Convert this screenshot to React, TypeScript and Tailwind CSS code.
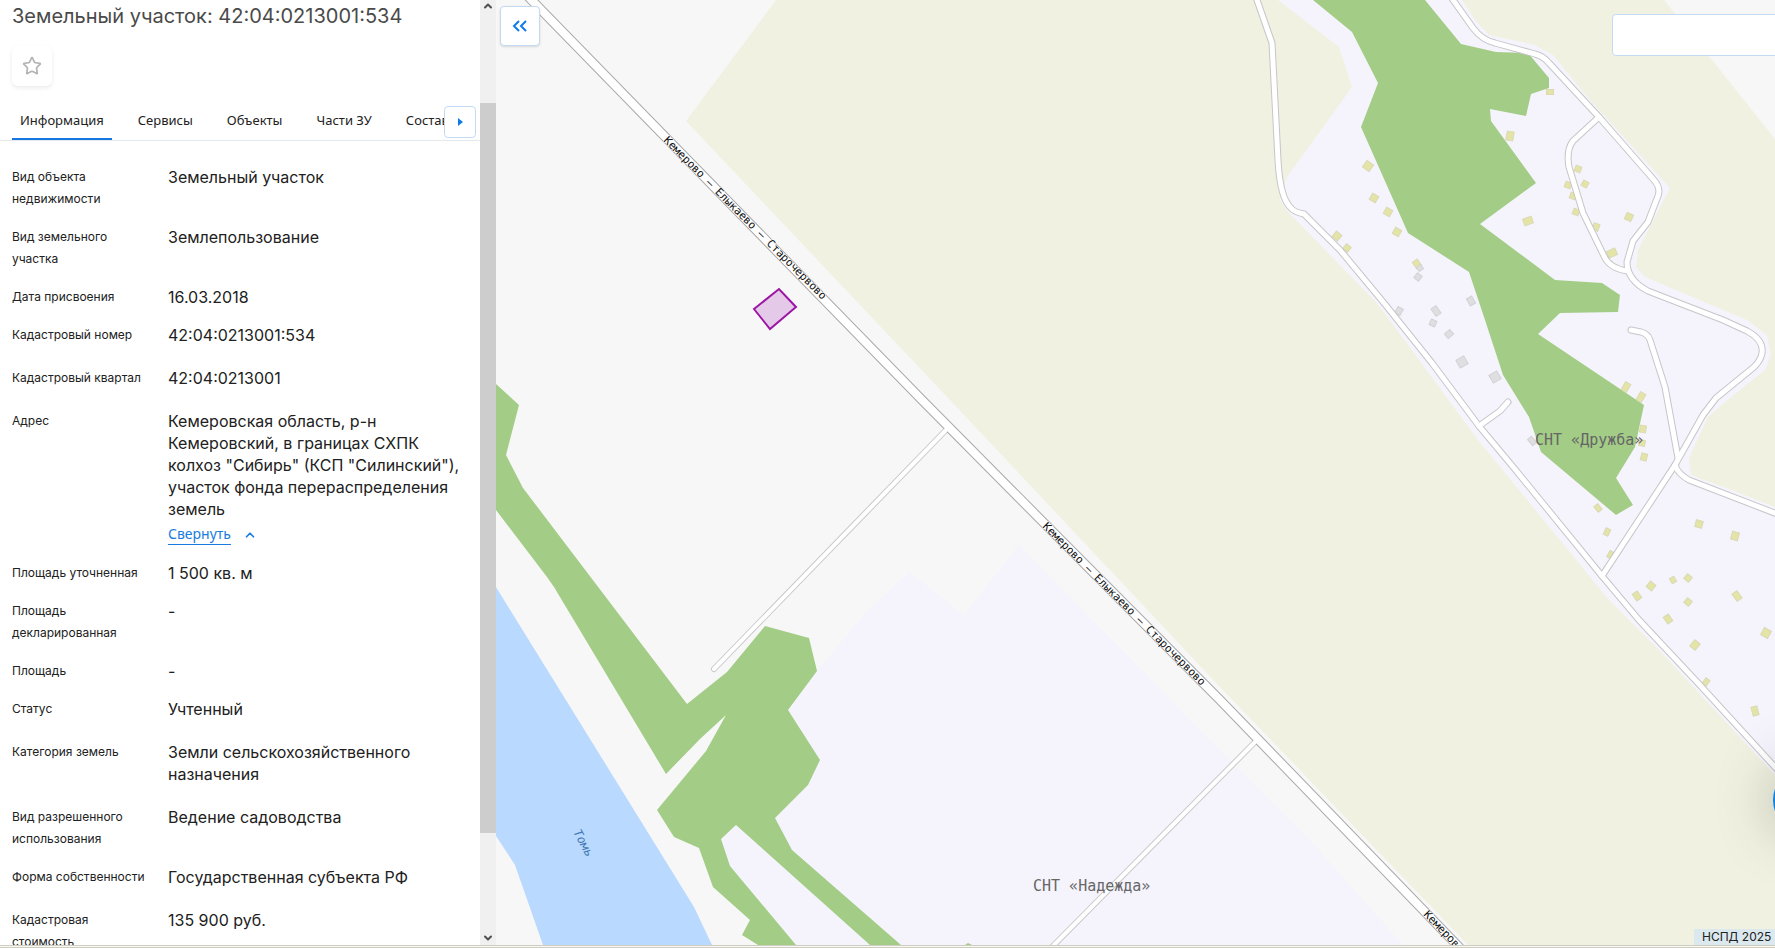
import { useState } from "react";
import { ChevronDown, ChevronUp, ChevronsLeft, Star } from "lucide-react";

const tabs = ["Информация", "Сервисы", "Объекты", "Части ЗУ", "Состав"];

type Row = { label: string; value: string; tall?: boolean; collapsible?: boolean };

const rows: Row[] = [
  { label: "Вид объекта недвижимости", value: "Земельный участок" },
  { label: "Вид земельного участка", value: "Землепользование" },
  { label: "Дата присвоения", value: "16.03.2018" },
  { label: "Кадастровый номер", value: "42:04:0213001:534", tall: true },
  { label: "Кадастровый квартал", value: "42:04:0213001", tall: true },
  {
    label: "Адрес",
    value:
      'Кемеровская область, р-н Кемеровский, в границах СХПК колхоз "Сибирь" (КСП "Силинский"), участок фонда перераспределения земель',
    collapsible: true,
  },
  { label: "Площадь уточненная", value: "1 500 кв. м" },
  { label: "Площадь декларированная", value: "-" },
  { label: "Площадь", value: "-" },
  { label: "Статус", value: "Учтенный", tall: true },
  { label: "Категория земель", value: "Земли сельскохозяйственного назначения", tall: true },
  { label: "Вид разрешенного использования", value: "Ведение садоводства" },
  { label: "Форма собственности", value: "Государственная субъекта РФ", tall: true },
  { label: "Кадастровая стоимость", value: "135 900 руб." },
];

const mainRoad = "M512 -20 L922 400 L1040 519 L1220 700 L1457 945 L1477 966";

const laneRoads = [
  "M946 430 L714 669",
  "M1255 742 L1054 945 L1044 955",
];

const streets = [
  "M1254 -10 L1257 0 L1272 43 L1278 160 Q1280 198 1291 208 Q1294 212 1304 214 L1340 250 L1384 303 L1432 363 L1479 426 L1514 468 L1602 576 L1639 620 L1698 683 L1785 778",
  "M1446 -10 L1473 28 Q1482 40 1495 43 L1535 54 Q1543 56 1549 63 L1599 117 L1654 180 Q1661 188 1658 196 L1648 222 L1633 241 L1627 262 Q1627 280 1648 291 L1723 320 L1747 331 Q1764 340 1762 353 Q1761 360 1754 367 L1716 398 L1703 415 L1675 465 L1602 576",
  "M1599 117 L1573 141 Q1566 150 1569 167 L1583 213 L1604 256 Q1609 268 1627 271",
  "M1631 330 L1641 332 Q1648 334 1650 340 L1665 387 L1678 458",
  "M1675 465 Q1678 474 1689 480 L1785 517",
  "M1479 426 L1500 411 L1508 402",
];

// x, y, width, height, angle
const houses = [
  [1550, 92, 7, 5, 0],
  [1510, 136, 7, 9, 10],
  [1368, 166, 8, 8, 35],
  [1374, 198, 7, 7, 30],
  [1388, 212, 7, 7, 30],
  [1397, 232, 7, 7, 30],
  [1337, 236, 7, 7, 40],
  [1347, 248, 6, 6, 40],
  [1417, 264, 6, 8, -35],
  [1528, 221, 9, 7, -20],
  [1578, 169, 6, 6, 20],
  [1568, 185, 6, 6, 20],
  [1585, 184, 6, 6, 30],
  [1573, 196, 6, 6, 20],
  [1576, 212, 6, 6, 20],
  [1596, 227, 6, 7, 20],
  [1612, 253, 9, 7, -25],
  [1629, 217, 7, 7, 25],
  [1626, 387, 6, 9, 30],
  [1641, 397, 6, 9, 30],
  [1643, 429, 6, 7, 10],
  [1642, 443, 6, 6, 10],
  [1644, 457, 6, 7, 15],
  [1598, 508, 5, 7, -40],
  [1607, 532, 5, 7, 25],
  [1611, 555, 6, 7, 30],
  [1699, 524, 7, 7, 15],
  [1735, 536, 7, 8, 15],
  [1651, 586, 7, 7, 40],
  [1637, 596, 6, 8, -35],
  [1673, 580, 5, 6, -30],
  [1688, 578, 6, 6, 40],
  [1688, 602, 6, 6, 40],
  [1737, 596, 6, 9, -35],
  [1668, 619, 6, 8, -35],
  [1695, 645, 7, 8, 40],
  [1766, 633, 8, 8, 30],
  [1706, 682, 5, 7, 35],
  [1755, 711, 6, 9, -15],
];

const sheds = [
  [1420, 268, 5, 5, -35],
  [1418, 277, 6, 6, 40],
  [1399, 311, 6, 7, 30],
  [1436, 311, 6, 9, -35],
  [1471, 301, 6, 8, -30],
  [1433, 323, 6, 6, 25],
  [1449, 334, 6, 7, 50],
  [1462, 362, 9, 9, -30],
  [1495, 377, 9, 9, -30],
  [1532, 441, 5, 8, -40],
];

const roadLabels = [
  { x: 663, y: 141, angle: 45 },
  { x: 1042, y: 527, angle: 45 },
  { x: 1423, y: 915, angle: 46 },
];

const Road = ({ d, width, edge }: { d: string; width: number; edge: string }) => (
  <path d={d} fill="none" stroke={edge} strokeWidth={width} strokeLinecap="round" strokeLinejoin="round" />
);

const MapCanvas = () => (
  <svg
    viewBox="496 0 1279 945"
    preserveAspectRatio="xMinYMin slice"
    className="absolute inset-0 h-full w-full font-['DejaVu_Sans_Mono',monospace]"
    role="img"
    aria-label="Карта"
  >
    <rect x="496" width="1279" height="945" fill="#f7f7f7" />
    <path d="M496 587 L694 907 L712 945 L543 945 L515 865 L496 836Z" fill="#bad9fe" />
    <path
      d="M817 671 L866 612 L909 572 L964 615 L1019 545 L1213 743 L1310 840 L1403 945 L796 945 L730 866 L721 839 L736 825 L790 770 L788 710Z"
      fill="#f5f4fc"
    />
    <path d="M776 0 L686 121 L950 400 L1220 687 L1468 945 L1775 945 L1775 0Z" fill="#f0f1e0" />
    <path d="M1664 0 L1775 139 L1775 0Z" fill="#f7f7f7" />
    <path
      d="M1278 0 L1339 47 L1352 87 L1287 177 L1280 200 L1289 213 L1376 302 L1397 330 L1478 440 L1560 540 L1609 600 L1662 653 L1775 775 L1775 507 L1737 492 L1691 475 L1689 458 L1708 417 L1730 398 L1765 370 L1771 355 L1767 335 L1747 320 L1645 277 L1636 267 L1638 250 L1657 213 L1670 188 L1588 98 L1553 55 L1535 45 L1489 35 L1475 20 L1462 0Z"
      fill="#f5f4fc"
    />
    <path
      d="M1313 0 L1352 32 L1378 83 L1361 127 L1408 233 L1469 272 L1485 320 L1503 375 L1529 417 L1541 452 L1616 515 L1633 505 L1616 478 L1635 447 L1644 405 L1538 334 L1560 313 L1618 312 L1620 295 L1602 283 L1555 280 L1480 224 L1536 183 L1491 121 L1490 109 L1526 116 L1531 94 L1549 88 L1549 78 L1528 53 L1496 52 L1461 44 L1425 0Z"
      fill="#a3cc86"
    />
    <path
      d="M496 384 L519 405 L506 455 L523 488 L687 704 L727 672 L765 626 L809 638 L817 671 L788 710 L820 760 L808 785 L775 818 L792 850 L901 945 L870 945 L736 825 L721 839 L730 866 L796 945 L758 945 L742 935 L750 920 L713 887 L699 848 L674 837 L657 810 L706 751 L726 715 L700 739 L666 774 L554 587 L547 577 L496 510Z"
      fill="#a3cc86"
    />
    <path d="M965 945 L968 943 L972 945Z" fill="#a3cc86" />

    {houses.map(([x, y, w, h, a]) => (
      <rect
        key={`${x}-${y}`}
        x={x - w / 2}
        y={y - h / 2}
        width={w}
        height={h}
        transform={`rotate(${a} ${x} ${y})`}
        fill="#e3e4a6"
        stroke="#d9d9b4"
      />
    ))}
    {sheds.map(([x, y, w, h, a]) => (
      <rect
        key={`${x}-${y}`}
        x={x - w / 2}
        y={y - h / 2}
        width={w}
        height={h}
        transform={`rotate(${a} ${x} ${y})`}
        fill="#dfdfe2"
        stroke="#d2d2d6"
      />
    ))}

    {streets.map((d) => <Road key={d} d={d} width={7} edge="#c6c6ca" />)}
    {laneRoads.map((d) => <Road key={d} d={d} width={6} edge="#c9c9c9" />)}
    <Road d={mainRoad} width={10} edge="#a9a9a9" />
    {streets.map((d) => <Road key={d} d={d} width={5} edge="#ffffff" />)}
    {laneRoads.map((d) => <Road key={d} d={d} width={4} edge="#ffffff" />)}
    <Road d={mainRoad} width={8} edge="#ffffff" />

    <path d="M754 309 L779 289 L796 307 L770 329Z" fill="#e5c9e8" stroke="#9c16a5" strokeWidth="2" />

    {roadLabels.map(({ x, y, angle }) => (
      <text
        key={x}
        x={x}
        y={y}
        transform={`rotate(${angle} ${x} ${y})`}
        fontSize="11"
        fill="#111111"
        stroke="#ffffff"
        strokeWidth="1"
        paintOrder="stroke"
      >
        Кемерово – Елыкаево – Старочервово
      </text>
    ))}
    <text x="573" y="832" transform="rotate(62 573 832)" fontSize="12" fontStyle="italic" fill="#4679b8">
      Томь
    </text>
    <text x="1535" y="445" fontSize="15" fill="#666666">СНТ «Дружба»</text>
    <text x="1033" y="891" fontSize="15" fill="#666666">СНТ «Надежда»</text>
  </svg>
);

const Scrollbar = () => (
  <div className="flex w-4 shrink-0 flex-col items-center bg-[#f0f0f0] text-[#505050]">
    <ChevronUp size={12} strokeWidth={4} />
    <div className="h-[91px]" />
    <div className="w-full flex-1 bg-[#cdcdcd]" />
    <div className="h-[99px]" />
    <ChevronDown size={12} strokeWidth={4} className="mb-px" />
  </div>
);

const App = () => {
  const [active, setActive] = useState("Информация");
  const [open, setOpen] = useState(true);

  return (
    <div className="flex h-screen flex-col overflow-hidden bg-white font-['Inter',sans-serif] text-[#212121]">
      <div className="flex min-h-0 flex-1">
        <aside className="flex w-[496px] shrink-0">
          <div className="min-w-0 flex-1 overflow-hidden">
            <h1 className="px-3 pt-1 text-xl leading-6 text-[#4a4a4a]">
              Земельный участок: 42:04:0213001:534
            </h1>
            <button
              type="button"
              aria-label="В избранное"
              className="mt-[18px] ml-3 flex h-10 w-10 items-center justify-center rounded-md bg-white text-[#b3b3b3] shadow-[0_2px_4px_rgba(0,0,0,0.08)]"
            >
              <Star size={20} strokeWidth={2} strokeLinejoin="miter" />
            </button>

            <div className="relative mt-5 flex h-[35px] border-b border-[#e4e9ee]">
              <div className="flex gap-[18px] overflow-hidden pl-3 font-['Noto_Sans',sans-serif]" role="tablist">
                {tabs.map((tab) => (
                  <button
                    key={tab}
                    type="button"
                    role="tab"
                    aria-selected={active === tab}
                    onClick={() => setActive(tab)}
                    className={
                      active === tab
                        ? "border-b-2 border-[#1677e0] px-2 pb-1 text-[13px] leading-5 whitespace-nowrap"
                        : "border-b-2 border-transparent px-2 pb-1 text-[13px] leading-5 whitespace-nowrap"
                    }
                  >
                    {tab}
                  </button>
                ))}
              </div>
              <button
                type="button"
                aria-label="Следующие вкладки"
                className="absolute top-0 right-1 flex h-8 w-8 items-center justify-center rounded border border-[#c3daf5] bg-white"
              >
                <svg width="5" height="8" viewBox="0 0 5 8" fill="#0f7be6">
                  <path d="M0 0 L5 4 L0 8Z" />
                </svg>
              </button>
            </div>

            <dl className="flex flex-col gap-4 pt-[25px] pl-3">
              {rows.map((row) => (
                <div key={row.label} className={row.tall ? "flex pb-[5px]" : "flex"}>
                  <dt className="w-[156px] shrink-0 pr-5 text-xs leading-[22px]">{row.label}</dt>
                  <dd className="w-[304px] text-base leading-[22px]">
                    <p className={open ? "" : "line-clamp-2"}>{row.value}</p>
                    {row.collapsible && (
                      <button
                        type="button"
                        onClick={() => setOpen(!open)}
                        className="mt-1 flex items-center gap-3 pb-px font-['Noto_Sans',sans-serif] text-sm text-[#1a7ce0]"
                      >
                        <span className="border-b border-[#1a7ce0]">{open ? "Свернуть" : "Развернуть"}</span>
                        <ChevronUp size={14} strokeWidth={3} />
                      </button>
                    )}
                  </dd>
                </div>
              ))}
            </dl>
          </div>
          <Scrollbar />
        </aside>

        <main className="relative min-w-0 flex-1 overflow-hidden">
          <MapCanvas />
          <button
            type="button"
            aria-label="Свернуть панель"
            className="absolute top-1.5 left-1 flex h-10 w-10 items-center justify-center rounded border border-[#c3daf5] bg-white text-[#0f7be6] shadow-sm"
          >
            <ChevronsLeft size={24} strokeWidth={2} strokeLinecap="butt" strokeLinejoin="miter" />
          </button>
          <input
            type="text"
            aria-label="Поиск"
            className="absolute top-3.5 -right-1 h-[42px] w-[167px] rounded border border-[#c3daf5] bg-white px-3 text-sm"
          />
          <button
            type="button"
            aria-label="Помощь"
            className="absolute -right-[62px] bottom-[113px] h-16 w-16 rounded-full bg-[#0f84e0] shadow-[0_0_56px_rgba(60,60,60,0.35)]"
          />
          <div className="absolute right-0 bottom-0 w-[81px] overflow-hidden bg-[#dbe9ef] pl-2 text-xs leading-4 whitespace-nowrap">
            НСПД 2025 ©
          </div>
        </main>
      </div>
      <div className="h-[3px] shrink-0 border-y border-[#cfccc0] bg-[#f8f8f4]" />
    </div>
  );
};

export default App;
